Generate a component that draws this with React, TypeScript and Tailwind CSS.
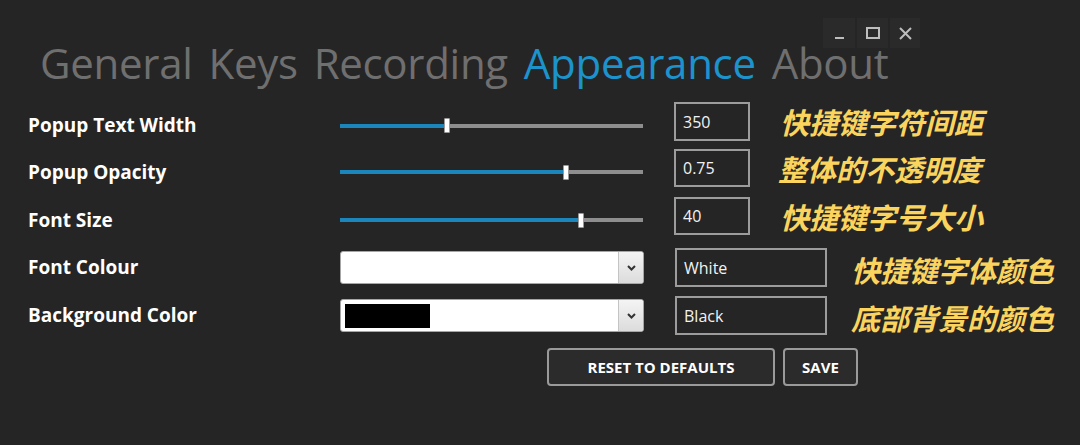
import { FC } from "react";

const ui = { fontFamily: '"Open Sans", "Noto Sans", sans-serif' };
const cjk = { fontFamily: '"Noto Sans CJK SC", "Noto Sans", sans-serif' };

interface SliderProps {
  pct: number; // thumb left offset in px inside the 303px track
}

const Slider: FC<SliderProps> = ({ pct }) => (
  <div className="mt-[8px] flex h-[14px] w-[303px] items-center">
    <div className="h-[4px] bg-[#1a86bc]" style={{ width: pct }} />
    <div className="h-[15px] w-[6px] shrink-0 rounded-[1px] border border-[#9a9a9a] bg-white" />
    <div className="h-[4px] flex-1 bg-[#8e8e8e]" />
  </div>
);

const Note: FC<{ text: string; className?: string }> = ({ text, className }) => (
  <span
    style={cjk}
    className={`text-[29px] font-bold italic leading-none text-[#fbd45e] ${className ?? ""}`}
  >
    {text}
  </span>
);

const Combo: FC<{ swatch?: boolean }> = ({ swatch }) => (
  <div className="flex h-[33px] w-[304px] items-stretch overflow-hidden rounded-[3px] border border-[#a6a6a6] bg-white">
    <div className="flex flex-1 items-center px-[4px]">
      {swatch && <div className="h-[24px] w-[85px] bg-black" />}
    </div>
    <div className="flex w-[25px] items-center justify-center border-l border-[#c4c4c4] bg-gradient-to-b from-[#f4f4f4] to-[#dcdcdc]">
      <svg width="9" height="6" viewBox="0 0 9 6">
        <path d="M1 1 L4.5 4.5 L8 1" stroke="#333" strokeWidth="2" fill="none" />
      </svg>
    </div>
  </div>
);

const Label: FC<{ text: string; shift?: boolean }> = ({ text, shift }) => (
  <div className={`w-[312px] shrink-0 text-[19px] font-bold text-white ${shift ? "mt-[8px]" : ""}`}>
    {text}
  </div>
);

const Box: FC<{ value: string; w: string }> = ({ value, w }) => (
  <div className={`flex h-full ${w} items-center border-2 border-[#9c9c9c] px-[7px] text-[16px] text-[#f2f2f2]`}>
    {value}
  </div>
);

export default function App() {
  return (
    <div style={ui} className="h-[445px] w-[1080px] overflow-hidden bg-[#252525]">
      {/* header */}
      <div className="relative h-[102px]">
        <div className="absolute left-[823px] top-[18px] flex h-[30px] gap-[2px]">
          <div className="flex w-[32px] items-center justify-center bg-[#2a2a2a]">
            <div className="mt-[10px] h-[2px] w-[9px] bg-[#bdbdbd]" />
          </div>
          <div className="flex w-[31px] items-center justify-center bg-[#2a2a2a]">
            <div className="h-[12px] w-[14px] border-2 border-[#bdbdbd]" />
          </div>
          <div className="flex w-[30px] items-center justify-center bg-[#2a2a2a]">
            <svg width="13" height="13" viewBox="0 0 13 13">
              <path d="M1 1 L12 12 M12 1 L1 12" stroke="#bdbdbd" strokeWidth="2" />
            </svg>
          </div>
        </div>
        <div className="flex gap-[16px] pl-[40px] pt-[42px] text-[42px] leading-none tracking-[-0.3px] text-[#6f6f6f]">
          <span>General</span>
          <span>Keys</span>
          <span>Recording</span>
          <span className="text-[#1c93cc]">Appearance</span>
          <span>About</span>
        </div>
      </div>

      {/* form */}
      <div className="flex flex-col pl-[28px]">
        <div className="flex h-[39px] items-center">
          <Label text="Popup Text Width" shift />
          <Slider pct={104} />
          <div className="ml-[31px] h-full">
            <Box value="350" w="w-[76px]" />
          </div>
          <Note text="快捷键字符间距" className="ml-[30px]" />
        </div>
        <div className="mt-[8px] flex h-[38px] items-center">
          <Label text="Popup Opacity" shift />
          <Slider pct={223} />
          <div className="ml-[31px] h-full">
            <Box value="0.75" w="w-[76px]" />
          </div>
          <Note text="整体的不透明度" className="ml-[28px]" />
        </div>
        <div className="mt-[10px] flex h-[38px] items-center">
          <Label text="Font Size" shift />
          <Slider pct={238} />
          <div className="ml-[31px] h-full">
            <Box value="40" w="w-[76px]" />
          </div>
          <Note text="快捷键字号大小" className="ml-[30px]" />
        </div>
        <div className="mt-[13px] flex h-[39px] items-center">
          <Label text="Font Colour" />
          <Combo />
          <div className="ml-[31px] h-full">
            <Box value="White" w="w-[152px]" />
          </div>
          <Note text="快捷键字体颜色" className="ml-[24px] mt-[4px]" />
        </div>
        <div className="mt-[9px] flex h-[39px] items-center">
          <Label text="Background Color" />
          <Combo swatch />
          <div className="ml-[31px] h-full">
            <Box value="Black" w="w-[152px]" />
          </div>
          <Note text="底部背景的颜色" className="ml-[24px] mt-[4px]" />
        </div>

        <div className="mt-[13px] flex gap-[8px] pl-[519px]">
          <button className="h-[38px] w-[228px] rounded-[4px] border-2 border-[#9a9a9a] bg-[#2b2b2b] text-[15px] font-bold text-white">
            RESET TO DEFAULTS
          </button>
          <button className="h-[38px] w-[75px] rounded-[4px] border-2 border-[#9a9a9a] bg-[#2b2b2b] text-[15px] font-bold text-white">
            SAVE
          </button>
        </div>
      </div>
    </div>
  );
}
